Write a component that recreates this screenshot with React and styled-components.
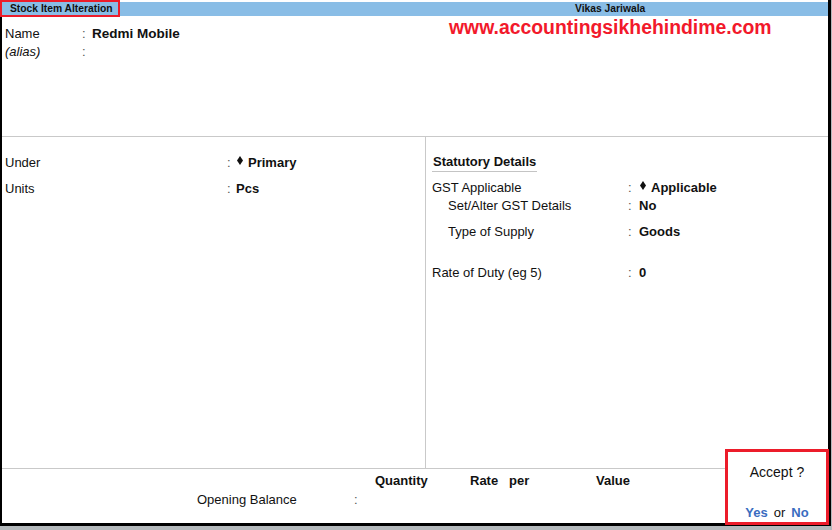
import React from "react";
import styled, { createGlobalStyle } from "styled-components";

const Global = createGlobalStyle`
  html, body { margin: 0; padding: 0; background: #fff; }
  body { font-family: "Liberation Sans", Arial, sans-serif; color: #111; }
  #root { width: 832px; height: 530px; }
`;

const Screen = styled.div`
  position: relative;
  width: 832px;
  height: 530px;
  display: flex;
  flex-direction: column;
  background: #b3b8bb;
  overflow: hidden;
`;

const Window = styled.div`
  height: 526px;
  box-sizing: border-box;
  margin-right: 1px;
  background: #fff;
  border-left: 2px solid #000;
  border-right: 3px solid #000;
  border-bottom: 3px solid #000;
  padding-top: 2px;
  display: flex;
  flex-direction: column;
`;

const TitleBar = styled.div`
  height: 14px;
  flex: none;
  background: #89bde6;
  display: grid;
  grid-template-columns: 573px 1fr;
  align-items: center;
  font-size: 10.3px;
  font-weight: bold;
  color: #111;
`;

const TitleText = styled.span`
  padding-left: ${(p) => p.$pad || 0}px;
  line-height: 14px;
`;

const TopSection = styled.div`
  position: relative;
  height: 120px;
  flex: none;
  box-sizing: border-box;
  padding: 8px 0 0 3px;
  display: flex;
  flex-direction: column;
`;

const Row = styled.div`
  display: flex;
  align-items: center;
  height: 18px;
  margin-top: ${(p) => p.$mt || 0}px;
  padding-left: ${(p) => p.$indent || 0}px;
  font-size: 13px;
`;

const Label = styled.span`
  width: ${(p) => p.$w}px;
  flex: none;
  font-style: ${(p) => (p.$italic ? "italic" : "normal")};
  white-space: nowrap;
`;

const Colon = styled.span`
  width: ${(p) => p.$w || 10}px;
  flex: none;
  color: #555;
`;

const Value = styled.span`
  font-weight: bold;
  font-size: ${(p) => p.$size || 13}px;
  display: inline-flex;
  align-items: center;
  white-space: nowrap;
`;

const Watermark = styled.div`
  position: absolute;
  left: 447px;
  top: 0px;
  font-size: 19.4px;
  font-weight: bold;
  color: #f2192b;
  white-space: nowrap;
`;

const MidSection = styled.div`
  height: 333px;
  flex: none;
  box-sizing: border-box;
  border-top: 1px solid #c9c9c9;
  border-bottom: 1px solid #c9c9c9;
  display: grid;
  grid-template-columns: 424px 1fr;
`;

const Column = styled.div`
  display: flex;
  flex-direction: column;
  padding: ${(p) => p.$pt}px 0 0 ${(p) => p.$pl}px;
  border-right: ${(p) => (p.$divider ? "1px solid #c9c9c9" : "none")};
`;

const SectionTitle = styled.div`
  align-self: flex-start;
  font-size: 13px;
  font-weight: bold;
  line-height: 18px;
  padding: 0 1px 0 1px;
  border-bottom: 1px solid #c4c4c4;
`;

const DiamondIcon = styled.svg`
  width: 6px;
  height: 9px;
  margin: 0 5px 3px 1px;
  flex: none;
`;

const Diamond = () => (
  <DiamondIcon viewBox="0 0 6 9">
    <polygon points="3,0 6,4.5 3,9 0,4.5" fill="#111" />
  </DiamondIcon>
);

const BottomSection = styled.div`
  flex: 1;
  display: flex;
  flex-direction: column;
  padding-top: 2px;
  font-size: 13px;
`;

const HeaderGrid = styled.div`
  display: grid;
  grid-template-columns: 373px 95px 39px 87px 1fr;
  height: 18px;
  align-items: center;
  font-weight: bold;
`;

const BalanceGrid = styled.div`
  display: grid;
  grid-template-columns: 195px 157px 1fr;
  height: 18px;
  margin-top: 1px;
  align-items: center;
`;

const Accept = styled.div`
  position: absolute;
  left: 725px;
  top: 449px;
  width: 104px;
  height: 76px;
  box-sizing: border-box;
  border: 3px solid #ec1c2a;
  background: #fff;
  display: flex;
  flex-direction: column;
  align-items: center;
  font-size: 13px;
  padding-top: 11px;
`;

const AcceptTitle = styled.div`
  line-height: 18px;
  font-size: 14px;
`;

const Choices = styled.div`
  margin-top: 23px;
  line-height: 18px;
  display: flex;
  gap: 6px;
`;

const Choice = styled.span`
  color: ${(p) => (p.$key ? "#3a6cc0" : "#111")};
  font-weight: ${(p) => (p.$key ? "bold" : "normal")};
`;

const Highlight = styled.div`
  position: absolute;
  left: 0;
  top: 0;
  width: 120px;
  height: 17px;
  box-sizing: border-box;
  border: 2px solid #ec1c2a;
  pointer-events: none;
`;

export default function App() {
  return (
    <>
      <Global />
      <Screen>
        <Window>
          <TitleBar>
            <TitleText $pad={8}>Stock Item Alteration</TitleText>
            <TitleText>Vikas Jariwala</TitleText>
          </TitleBar>
          <TopSection>
            <Watermark>www.accountingsikhehindime.com</Watermark>
            <Row>
              <Label $w={77}>Name</Label>
              <Colon>:</Colon>
              <Value $size={13.5}>Redmi Mobile</Value>
            </Row>
            <Row>
              <Label $w={77} $italic>(alias)</Label>
              <Colon>:</Colon>
            </Row>
          </TopSection>
          <MidSection>
            <Column $divider $pt={16} $pl={3}>
              <Row>
                <Label $w={222}>Under</Label>
                <Colon $w={9}>:</Colon>
                <Value>
                  <Diamond />
                  Primary
                </Value>
              </Row>
              <Row $mt={8}>
                <Label $w={222}>Units</Label>
                <Colon $w={9}>:</Colon>
                <Value>Pcs</Value>
              </Row>
            </Column>
            <Column $pt={16} $pl={6}>
              <SectionTitle>Statutory Details</SectionTitle>
              <Row $mt={6}>
                <Label $w={196}>GST Applicable</Label>
                <Colon $w={11}>:</Colon>
                <Value>
                  <Diamond />
                  Applicable
                </Value>
              </Row>
              <Row $indent={16}>
                <Label $w={180}>Set/Alter GST Details</Label>
                <Colon $w={11}>:</Colon>
                <Value>No</Value>
              </Row>
              <Row $indent={16} $mt={8}>
                <Label $w={180}>Type of Supply</Label>
                <Colon $w={11}>:</Colon>
                <Value>Goods</Value>
              </Row>
              <Row $mt={23}>
                <Label $w={196}>Rate of Duty (eg 5)</Label>
                <Colon $w={11}>:</Colon>
                <Value>0</Value>
              </Row>
            </Column>
          </MidSection>
          <BottomSection>
            <HeaderGrid>
              <span />
              <span>Quantity</span>
              <span>Rate</span>
              <span>per</span>
              <span>Value</span>
            </HeaderGrid>
            <BalanceGrid>
              <span />
              <span>Opening Balance</span>
              <Colon>:</Colon>
            </BalanceGrid>
          </BottomSection>
        </Window>
        <Highlight />
        <Accept>
          <AcceptTitle>Accept ?</AcceptTitle>
          <Choices>
            <Choice $key>Yes</Choice>
            <Choice>or</Choice>
            <Choice $key>No</Choice>
          </Choices>
        </Accept>
      </Screen>
    </>
  );
}
